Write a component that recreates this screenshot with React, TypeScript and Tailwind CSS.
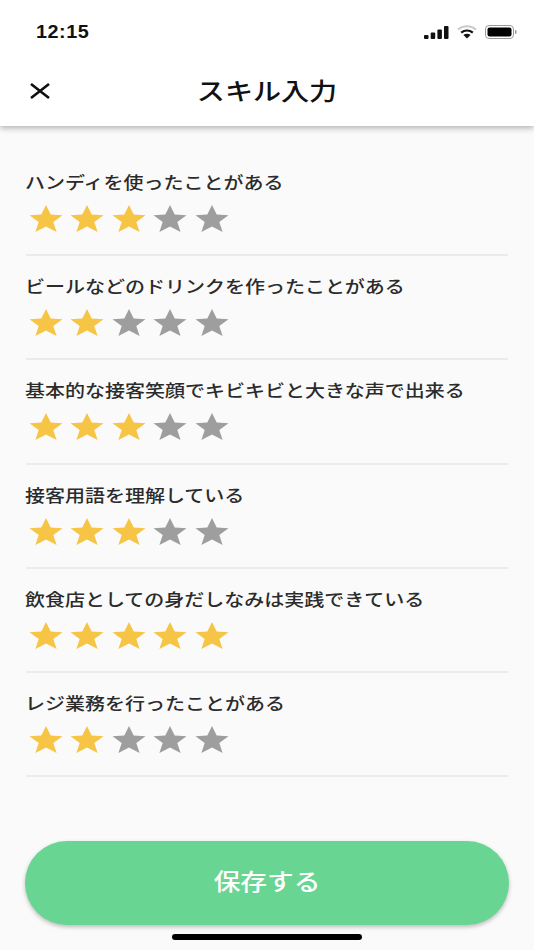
import React from 'react';

const skills = [
  { label: 'ハンディを使ったことがある', rating: 3 },
  { label: 'ビールなどのドリンクを作ったことがある', rating: 2 },
  { label: '基本的な接客笑顔でキビキビと大きな声で出来る', rating: 3 },
  { label: '接客用語を理解している', rating: 3 },
  { label: '飲食店としての身だしなみは実践できている', rating: 5 },
  { label: 'レジ業務を行ったことがある', rating: 2 },
];

const Star = ({ on }: { on: boolean }) => (
  <svg viewBox="0 0 34 28" className="w-[34px] h-[27px]" preserveAspectRatio="none">
    <path
      d="M17 0 L21.7 9.8 L33.5 10.6 L24.3 17.6 L27.6 28 L17 22.2 L6.4 28 L9.7 17.6 L0.5 10.6 L12.3 9.8 Z"
      className={on ? 'fill-[#f7c545]' : 'fill-[#9e9e9e]'}
    />
  </svg>
);

const SkillRow = ({ label, rating }: { label: string; rating: number }) => (
  <div className="h-[104.2px] pt-[19px] border-b-2 border-[#ebebeb] box-border">
    <p className="text-[17px] leading-[22px] font-medium text-[#2b2b2b] whitespace-nowrap origin-left -ml-px scale-x-[1.176]">{label}</p>
    <div className="flex gap-[7.4px] mt-[12px] ml-[3px]">
      {[1, 2, 3, 4, 5].map((n) => (
        <Star key={n} on={n <= rating} />
      ))}
    </div>
  </div>
);

export default function App() {
  return (
    <div
      className="relative w-[534px] h-[950px] bg-[#fafafa] flex flex-col overflow-hidden"
      style={{ fontFamily: '"Noto Sans CJK JP", "Liberation Sans", sans-serif' }}
    >
      <header className="h-[126px] bg-white shadow-[0_2px_6px_rgba(0,0,0,0.3)] relative flex flex-col">
        {/* status bar */}
        <div className="h-[62px] flex items-center justify-between pl-[36px] pr-[17px] pt-[2px]">
          <span className="text-[18px] font-bold tracking-[0.5px] text-[#111] origin-left scale-x-[1.1]" style={{ fontFamily: '"Liberation Sans", sans-serif' }}>12:15</span>
          <div className="flex items-center gap-[8px]">
            <svg width="25" height="13" viewBox="0 0 25 13">
              <rect x="0" y="9" width="4.5" height="4" rx="1" fill="#111" />
              <rect x="6.7" y="6.5" width="4.5" height="6.5" rx="1" fill="#111" />
              <rect x="13.4" y="3.5" width="4.5" height="9.5" rx="1" fill="#111" />
              <rect x="20" y="0" width="4.5" height="13" rx="1" fill="#111" />
            </svg>
            <svg width="20" height="14" viewBox="0 0 20 14">
              <path d="M1 4.6 C6 0.2 14 0.2 19 4.6" fill="none" stroke="#c9c9c9" strokeWidth="2" />
              <path d="M4.2 7.6 C7.6 4.8 12.4 4.8 15.8 7.6" fill="none" stroke="#111" strokeWidth="2.2" />
              <path d="M10 13.5 L6.4 10.1 C8.6 8.4 11.4 8.4 13.6 10.1 Z" fill="#111" />
            </svg>
            <svg width="32" height="14" viewBox="0 0 32 14">
              <rect x="0.5" y="0.5" width="28" height="13" rx="3.5" fill="none" stroke="#9a9a9a" />
              <rect x="2.5" y="2.5" width="24" height="9" rx="2" fill="#000" />
              <rect x="30" y="5" width="1.5" height="4" rx="0.7" fill="#9a9a9a" />
            </svg>
          </div>
        </div>
        {/* nav */}
        <div className="flex-1 relative flex items-center justify-center pb-[8px]">
          <svg width="20" height="16" viewBox="0 0 20 16" className="absolute left-[30px] top-[21px]">
            <path d="M1 1 L19 15 M19 1 L1 15" stroke="#111" strokeWidth="2.6" fill="none" />
          </svg>
          <h1 className="text-[24px] leading-[30px] font-medium text-[#111] scale-x-[1.17]">スキル入力</h1>
        </div>
      </header>

      <main className="px-[26px] pt-[26px] flex-1">
        {skills.map((s) => (
          <SkillRow key={s.label} label={s.label} rating={s.rating} />
        ))}
      </main>

      <div className="px-[25px] pb-[25px]">
        <button className="w-full h-[84px] rounded-[42px] bg-[#69d592] shadow-[0_2px_4px_rgba(0,0,0,0.25)] text-white text-[23px] leading-[28px] font-medium pb-[6px]">
          <span className="inline-block scale-x-[1.16]">保存する</span>
        </button>
      </div>
      <div className="absolute left-[172px] top-[934px] w-[190px] h-[6px] rounded-full bg-black" />
    </div>
  );
}
